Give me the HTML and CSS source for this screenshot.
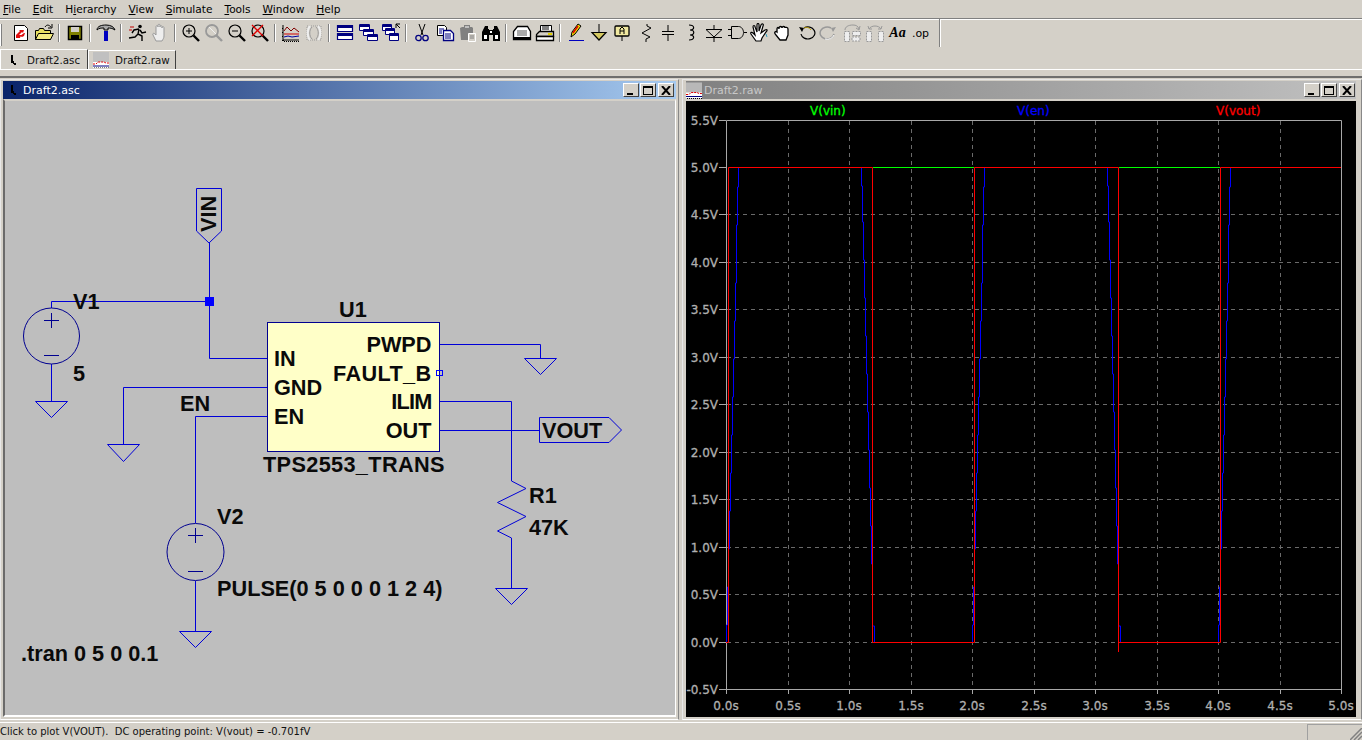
FILE: index.html
```html
<!DOCTYPE html>
<html lang="en">
<head>
<meta charset="utf-8">
<title>LTspice - Draft2</title>
<link rel="stylesheet" href="styles.css">
</head>
<body>
<nav class="menubar">
  <span class="menu"><u>F</u>ile</span><span class="menu"><u>E</u>dit</span><span class="menu">H<u>i</u>erarchy</span><span class="menu"><u>V</u>iew</span><span class="menu"><u>S</u>imulate</span><span class="menu"><u>T</u>ools</span><span class="menu"><u>W</u>indow</span><span class="menu"><u>H</u>elp</span>
</nav>
<div class="toolbar">
  <span class="grip"></span>
  <span class="tb"><svg viewBox="0 0 20 20"><path d="M3.5 2.5h10l3 3v12h-13z" fill="#fff" stroke="#000"/><path d="M5 12l4-4-1-1h5l-1 3-1-1-3 3 2 0-1 3-4 0zM9 13l4-3 1 0-1 3-2 1z" fill="#e01010"/></svg></span>
  <span class="tb"><svg viewBox="0 0 20 20"><path d="M1.5 7.5h3l1-2h4l1 2h6v9h-15z" fill="#e8e060" stroke="#000"/><path d="M1.5 16.5l3-6h15l-3 6z" fill="#f4ec80" stroke="#000"/><path d="M11 4c2-3 4-2 6 0M18 1v4h-4" fill="none" stroke="#000"/></svg></span>
  <span class="sep"></span>
  <span class="tb"><svg viewBox="0 0 20 20"><path d="M3.5 3.5h13v13h-13z" fill="#808000" stroke="#000" stroke-width="1.5"/><path d="M6 4h8v5H6z" fill="#d4d0c8"/><path d="M6 12h8v4H6z" fill="#000"/></svg></span>
  <span class="sep"></span>
  <span class="tb"><svg viewBox="0 0 20 20"><path d="M1 7c0-4 5-5 9-5 5 0 8 2 9 5-3-2-5-2-7-2v2H8V5C5 5 3 5 1 7z" fill="#a8a8a8" stroke="#000"/><path d="M8 8h4v10H8z" fill="#0000c0"/></svg></span>
  <span class="sep"></span>
  <span class="tb"><svg viewBox="0 0 20 20"><circle cx="13" cy="3.5" r="1.800"/><path d="M12 6l-5 1-2 3M12 6l-1 5 4 2 0 5M11 11l-3 3-6 1M13 7l2 3 4-1" fill="none" stroke="#000" stroke-width="1.400"/><path d="M3 4h4M2 7h3" stroke="#c00000"/></svg></span>
  <span class="tb"><svg viewBox="0 0 20 20"><path d="M6 18l-3-6c-1-2 1-2 2-1l1 1V4c0-2 2-2 2 0V2c0-1 2-1 2 0v2c0-2 2-2 2 0v1c0-2 2-2 2 0v8c0 2-1 3-2 5z" fill="#eee" stroke="#999"/></svg></span>
  <span class="sep"></span>
  <span class="tb"><svg viewBox="0 0 20 20"><circle cx="8" cy="8" r="6" fill="none" stroke="#000" stroke-width="1.200"/><path d="M5 8h6M8 5v6" stroke="#000"/><path d="M12.500 12.500l5.500 5.500" stroke="#000" stroke-width="2.400"/></svg></span>
  <span class="tb"><svg viewBox="0 0 20 20"><circle cx="8" cy="8" r="6" fill="none" stroke="#999" stroke-width="1.800"/><path d="M12.500 12.500l5.500 5.500" stroke="#999" stroke-width="2.400"/><path d="M5 4l7 7" stroke="#eee"/></svg></span>
  <span class="tb"><svg viewBox="0 0 20 20"><circle cx="8" cy="8" r="6" fill="none" stroke="#000" stroke-width="1.200"/><path d="M5 8h6" stroke="#000"/><path d="M12.500 12.500l5.500 5.500" stroke="#000" stroke-width="2.400"/></svg></span>
  <span class="tb"><svg viewBox="0 0 20 20"><circle cx="8" cy="8" r="6" fill="none" stroke="#000" stroke-width="1.200"/><path d="M12.500 12.500l5.500 5.500" stroke="#000" stroke-width="2.400"/><path d="M2 2l11 11M13 2L2 13" stroke="#e00000" stroke-width="1.300"/></svg></span>
  <span class="sep"></span>
  <span class="tb"><svg viewBox="0 0 20 20"><path d="M2 2v15h16M1 17.500h2M1 13.500h1M1 9.500h1M1 5.500h1" fill="none" stroke="#000"/><path d="M3 18.500h16" stroke="#000" stroke-dasharray="1 1"/><path d="M3 8l3-4 4 4 3-3 5 4" fill="none" stroke="#800000"/><path d="M3 11h15" stroke="#d00000"/><path d="M3 14l4-1 4 1 7-1" fill="none" stroke="#0000a0"/></svg></span>
  <span class="tb"><svg viewBox="0 0 20 20"><path d="M3 3h14v14H3z" fill="none" stroke="#999" stroke-dasharray="1 1"/><path d="M6 3c-3 3-3 11 0 14M14 3c3 3 3 11 0 14" fill="none" stroke="#eee" stroke-width="2"/><path d="M8 4c-3 3-3 9 0 12M12 4c3 3 3 9 0 12" fill="none" stroke="#999"/></svg></span>
  <span class="sep"></span>
  <span class="tb"><svg viewBox="0 0 20 20"><path d="M2.500 2.500h15v6h-15zM2.500 10.500h15v6h-15z" fill="#fff" stroke="#000080" stroke-width="1.200"/><path d="M2 3h16v2H2zM2 11h16v2H2z" fill="#000080"/></svg></span>
  <span class="tb"><svg viewBox="0 0 20 20"><path d="M1.500 1.500h10v6h-10zM5.500 6.500h10v6h-10zM9.500 11.500h10v6h-10z" fill="#fff" stroke="#000080"/><path d="M1 2h11v2H1zM5 7h11v2H5zM9 12h11v2H9z" fill="#000080"/></svg></span>
  <span class="tb"><svg viewBox="0 0 20 20"><path d="M1.500 1.500h9v6h-9zM4.500 5.500h9v6h-9zM8.500 10.500h9v7h-9z" fill="#fff" stroke="#000080"/><path d="M1 2h10v2H1zM4 6h10v2H4zM8 11h10v2H8z" fill="#000080"/><path d="M15 5V1h4M15 1l4 4" fill="none" stroke="#000"/></svg></span>
  <span class="sep"></span>
  <span class="tb"><svg viewBox="0 0 20 20"><path d="M7 1l4 11M13 1L9 12" stroke="#000" fill="none"/><circle cx="6.500" cy="15" r="2.700" fill="none" stroke="#000080" stroke-width="1.300"/><circle cx="13.500" cy="15" r="2.700" fill="none" stroke="#000080" stroke-width="1.300"/></svg></span>
  <span class="tb"><svg viewBox="0 0 20 20"><path d="M2.500 2.500h7l2 2v8h-9z" fill="#fff" stroke="#000"/><path d="M8.500 7.500h7l3 3v7h-10z" fill="#fff" stroke="#000080" stroke-width="1.300"/><path d="M4 6h5M4 8h3M4 10h3M10 11h6M10 13h6M10 15h6" stroke="#000080"/></svg></span>
  <span class="tb"><svg viewBox="0 0 20 20"><path d="M2 5l2-1h2V2h6v2h2l1 1v12H3z" fill="#808080"/><path d="M7 4h4" stroke="#fff"/><path d="M10.500 10.500h7v8h-7z" fill="#d4d0c8" stroke="#fff"/><path d="M12 13h4M12 15h4" stroke="#808080"/></svg></span>
  <span class="tb"><svg viewBox="0 0 20 20"><path d="M4 3h3v3h1v12H1V9zM16 3h-3v3h-1v12h7V9z" fill="#000"/><path d="M8 7h4v5H8z" fill="#000"/><path d="M3 12h3v4H3zM14 12h3v4h-3zM9 8h2v2H9z" fill="#fff"/></svg></span>
  <span class="sep"></span>
  <span class="tb"><svg viewBox="0 0 20 20"><path d="M5.500 3.500h10l3 5v8h-17v-8z" fill="#fff" stroke="#000" stroke-width="1.300"/><path d="M5 7h10v6H5z" fill="#aaa"/><path d="M2 15h16" stroke="#000" stroke-width="2"/></svg></span>
  <span class="tb"><svg viewBox="0 0 20 20"><path d="M5.500 2.500h11v6h-11z" fill="#fff" stroke="#000"/><path d="M7 4h7M7 6h7" stroke="#000"/><path d="M4.500 8.500h14v5h-17v-2z" fill="#d4d0c8" stroke="#000" stroke-width="1.300"/><path d="M1.500 13.500h17v4h-17z" fill="#fff" stroke="#000" stroke-width="1.300"/><path d="M13 11h4" stroke="#e0d000" stroke-width="2"/></svg></span>
  <span class="sep"></span>
  <span class="tb"><svg viewBox="0 0 20 20"><path d="M5 14l1-5 6-8 3 2-6 8z" fill="#f0e000" stroke="#000"/><path d="M7 10l5-7" stroke="#e00000" stroke-width="1.500"/><path d="M3 17.500h15" stroke="#0000c0"/></svg></span>
  <span class="tb"><svg viewBox="0 0 20 20"><path d="M10 1v8" stroke="#000"/><path d="M3 9.500h14L10 17z" fill="#d4c860" stroke="#000" stroke-width="1.200"/></svg></span>
  <span class="tb"><svg viewBox="0 0 20 20"><rect x="3" y="3" width="14" height="10" rx="1" fill="#f0e8a0" stroke="#000" stroke-width="1.300"/><path d="M8 11V6l2-2 2 2v5M8 8h4" fill="none" stroke="#000"/><path d="M10 13v5" stroke="#000"/></svg></span>
  <span class="tb"><svg viewBox="0 0 20 20"><path d="M12 1v2l4 2-9 5 8 4-4 2v3" fill="none" stroke="#000"/></svg></span>
  <span class="tb"><svg viewBox="0 0 20 20"><path d="M10 2v6M4 8.500h12M4 11.500h12M10 12v6" stroke="#000"/></svg></span>
  <span class="tb"><svg viewBox="0 0 20 20"><path d="M8 2c6 0 6 5 1 5 5 0 5 5 0 5 5 0 5 5-1 5" fill="none" stroke="#000" stroke-width="1.200"/></svg></span>
  <span class="tb"><svg viewBox="0 0 20 20"><path d="M10 2v4M2 6.500h16L10 14zM2 14.500h16M10 14v5" fill="none" stroke="#000"/></svg></span>
  <span class="tb"><svg viewBox="0 0 20 20"><path d="M4.500 3.500h7c3 0 5 3 5 6s-2 6-5 6h-7zM1 6.500h3M1 12.500h3M17 9.500h3" fill="#d4d0c8" stroke="#000"/></svg></span>
  <span class="tb"><svg viewBox="0 0 20 20"><path d="M6 18l-5-7c-1-2 1-2 2-1l2 2L3 4c0-2 2-2 2 0l2 5V2c0-2 2-2 2 0v6l2-6c1-2 3-1 2 1l-2 7 4-3c2-1 3 0 1 2l-4 6-1 3z" fill="#fff" stroke="#000" stroke-width="1.200"/><path d="M16 11l1 3" stroke="#30a0c0"/></svg></span>
  <span class="tb"><svg viewBox="0 0 20 20"><path d="M7 17l-4-5c-3-3 0-4 1-3V6c0-2 2-2 2 0V5c0-2 3-2 3 0 0-2 3-2 3 0 0-1 3-1 3 1v6l-2 5z" fill="#fff" stroke="#000" stroke-width="1.300"/></svg></span>
  <span class="tb"><svg viewBox="0 0 20 20"><path d="M5 11a7 6 0 1 0 3-6" fill="none" stroke="#000" stroke-width="1.200"/><path d="M8 5c2-1 5-1 7 2" fill="none" stroke="#c0a000"/><path d="M3 4l5 1-2 4z" fill="#000"/></svg></span>
  <span class="tb"><svg viewBox="0 0 20 20"><path d="M15 11a7 6 0 1 1-3-6" fill="none" stroke="#999" stroke-width="1.500"/><path d="M6 16a7 6 0 0 0 9-4" fill="none" stroke="#fff"/><path d="M17 4l-5 1 2 4z" fill="#999"/></svg></span>
  <span class="tb"><svg viewBox="0 0 20 20"><path d="M3 7c0-3 3-5 8-5 3 0 5 1 6 4M14 5l3 2 1-4" fill="none" stroke="#999"/><path d="M2.500 8.500h5v10h-5zM10.500 8.500h8v4h-8zM10 14h8v4h-8z" fill="#eee" stroke="#999" stroke-dasharray="2 1"/></svg></span>
  <span class="tb"><svg viewBox="0 0 20 20"><path d="M4 6c2-4 10-4 12 0M3 3l1 3 3 0M17 3l-1 3-3 0" fill="none" stroke="#999"/><path d="M1.500 8.500h5v10h-5zM13.500 8.500h5v10h-5z" fill="#eee" stroke="#999" stroke-dasharray="2 1"/></svg></span>
  <span class="tb"><span class="aa">Aa</span></span>
  <span class="tb"><span class="op">.op</span></span>
  <span class="sep sep-last"></span>
</div>
<div class="tabs">
  <span class="tab tab-active"><svg class="tab-icon" viewBox="0 0 16 16"><path d="M6 3h2v6h1v2h2v2h-2v-1H8v-1H6z" fill="#000"/></svg>Draft2.asc</span>
  <span class="tab"><svg class="tab-icon" viewBox="0 0 16 16"><path d="M0 0h16v16H0z" fill="#c0c0c0"/><path d="M0 10h16v6H0z" fill="#fff"/><path d="M0 12h3l2-2h6l2 1h3" fill="none" stroke="#e00000" stroke-dasharray="2 1"/><path d="M0 14h16" stroke="#000080"/><path d="M1 16h15" stroke="#000" stroke-dasharray="1 1"/></svg>Draft2.raw</span>
</div>
<main class="mdi">
  <section class="win win-left">
    <header class="title title-active">
      <svg class="title-icon" viewBox="0 0 16 16"><path d="M5 3h2v6h1v2h2v2H8v-1H7v-1H5z" fill="#000"/></svg>
      <span class="title-text">Draft2.asc</span>
      <span class="wbtns"><span class="wbtn"><i class="g-min"></i></span><span class="wbtn"><i class="g-max"></i></span><span class="wbtn wbtn-close"><svg viewBox="0 0 10 9"><path d="M1 0l8 9M9 0l-8 9" stroke="#000" stroke-width="2"/></svg></span></span>
    </header>
    <div class="canvas canvas-sch">
      <svg class="sch" viewBox="5 101 671 614" width="671" height="614">
        <g class="wires">
          <path d="M51.500 308V301.500H209.500M209.500 243V358.500H267"/>
          <path d="M51.500 364V401"/>
          <path d="M267 387.500H123.500V444"/>
          <path d="M267 416.500H195.500V523"/>
          <path d="M195.500 581V631"/>
          <path d="M439 344.500H540.500V358.500"/>
          <path d="M439 401.500H511.500V481"/>
          <path d="M439 430.500H539.500"/>
          <path d="M511.500 538V588"/>
        </g>
        <g class="shapes dark">
          <circle cx="51.500" cy="336" r="28"/>
          <path d="M44 320.500H59M51.500 313V328M44 355.500H59"/>
          <circle cx="195.500" cy="552" r="28.500"/>
          <path d="M188 535.500H203M195.500 528V543M188 571.500H203"/>
        </g>
        <g class="shapes">
          <path d="M35.500 401.500H67.500L51.500 417.500Z"/>
          <path d="M107.500 444.500H139.500L123.500 461.500Z"/>
          <path d="M179.500 631.500H211.500L195.500 647.500Z"/>
          <path d="M524.500 358.500H556.500L540.500 374.500Z"/>
          <path d="M495.500 588.500H527.500L511.500 604.500Z"/>
          <path d="M511.500 481L526 488.500 497.500 502.500 526 516.500 497.500 531 511.500 538"/>
          <path d="M196.500 188.500H221.500V231L209 243 196.500 231Z"/>
          <path d="M539.500 417.500H609L621.500 430 609 442.500H539.500Z"/>
        </g>
        <rect class="symbol" x="267.500" y="322.500" width="172" height="129"/>
        <rect class="junction" x="205" y="297" width="9" height="9"/>
        <rect class="pin" x="436.500" y="370.500" width="6" height="5"/>
        <g class="labels">
          <text x="73" y="309">V1</text>
          <text x="73" y="381">5</text>
          <text x="180" y="411">EN</text>
          <text x="339" y="317">U1</text>
          <text class="wide" x="263" y="472">TPS2553_TRANS</text>
          <text x="217" y="524">V2</text>
          <text x="217" y="596">PULSE(0 5 0 0 0 1 2 4)</text>
          <text x="21" y="661">.tran 0 5 0 0.1</text>
          <text x="529" y="503">R1</text>
          <text x="529" y="535">47K</text>
          <text x="542" y="438">VOUT</text>
          <text transform="translate(216 232) rotate(-90)">VIN</text>
        </g>
        <g class="labels pins">
          <text x="274" y="366">IN</text>
          <text x="274" y="395">GND</text>
          <text x="274" y="424">EN</text>
          <text class="end" x="431.500" y="352">PWPD</text>
          <text class="end wide" x="431.500" y="381">FAULT_B</text>
          <text class="end tight" x="431.500" y="409">ILIM</text>
          <text class="end" x="431.500" y="438">OUT</text>
        </g>
      </svg>
    </div>
  </section>
  <section class="win win-right">
    <header class="title title-idle">
      <svg class="title-icon-raw" viewBox="0 0 16 16"><path d="M0 0h16v16H0z" fill="#b8b8b8"/><path d="M0 10h16v6H0z" fill="#fff"/><path d="M0 12h3l2-2h6l2 1h3" fill="none" stroke="#e00000" stroke-dasharray="2 1"/><path d="M0 14h16" stroke="#000080"/><path d="M1 16h15" stroke="#000" stroke-dasharray="1 1"/></svg>
      <span class="title-text">Draft2.raw</span>
      <span class="wbtns"><span class="wbtn"><i class="g-min"></i></span><span class="wbtn"><i class="g-max"></i></span><span class="wbtn wbtn-close"><svg viewBox="0 0 10 9"><path d="M1 0l8 9M9 0l-8 9" stroke="#000" stroke-width="2"/></svg></span></span>
    </header>
    <div class="canvas canvas-plot">
      <svg class="plot" viewBox="686 101 670 614" width="670" height="614">
        <defs>
          <path id="rise" d="M726.500 642V625H727.500V587H728.500V549H729.500V511H730.500V473H731.500V435H732.500V397H733.500V359H734.500V321H735.500V283H736.500V225H737.500V187H738.500V167"/>
          <path id="fall" d="M861.500 167V186H862.500V222H863.500V260H864.500V298H865.500V336H866.500V374H867.500V412H868.500V450H869.500V488H870.500V526H871.500V564H872.500V626H874.500V642"/>
        </defs>
        <path class="grid" d="M727 214.500H1341M727 262.500H1341M727 309.500H1341M727 357.500H1341M727 404.500H1341M727 452.500H1341M727 499.500H1341M727 547.500H1341M727 594.500H1341M727 642.500H1341"/>
        <path class="grid" d="M788.500 121V689M849.500 121V689M911.500 121V689M972.500 121V689M1034.500 121V689M1095.500 121V689M1157.500 121V689M1218.500 121V689M1280.500 121V689"/>
        <path class="axis" d="M726.500 120.500H1341.500V689.500H726.500ZM719 120.500H726M719 167.500H726M719 214.500H726M719 262.500H726M719 309.500H726M719 357.500H726M719 404.500H726M719 452.500H726M719 499.500H726M719 547.500H726M719 594.500H726M719 642.500H726M719 689.500H726M788.500 689V694M849.500 689V694M911.500 689V694M972.500 689V694M1034.500 689V694M1095.500 689V694M1157.500 689V694M1218.500 689V694M1280.500 689V694M1341.500 689V694M726.500 689V694"/>
        <g class="tr-blue">
          <use href="#rise"/>
          <use href="#rise" transform="translate(246 0)"/>
          <use href="#rise" transform="translate(492 0)"/>
          <use href="#fall"/>
          <use href="#fall" transform="translate(246 0)"/>
        </g>
        <path class="tr-red" d="M726 642.500H728.500V167.500H872.500V642.500H974.500V167.500H1118.500V652M1118.500 642.500H1220.500V167.500H1341"/>
        <path class="tr-green" d="M873 167.500H974M1119 167.500H1220"/>
        <g class="ylab">
          <text x="718" y="125">5.5V</text><text x="718" y="172">5.0V</text><text x="718" y="219">4.5V</text><text x="718" y="267">4.0V</text><text x="718" y="314">3.5V</text><text x="718" y="362">3.0V</text><text x="718" y="409">2.5V</text><text x="718" y="457">2.0V</text><text x="718" y="504">1.5V</text><text x="718" y="552">1.0V</text><text x="718" y="599">0.5V</text><text x="718" y="647">0.0V</text><text x="718" y="694">-0.5V</text>
        </g>
        <g class="xlab">
          <text x="726" y="710">0.0s</text><text x="788" y="710">0.5s</text><text x="849" y="710">1.0s</text><text x="911" y="710">1.5s</text><text x="972" y="710">2.0s</text><text x="1034" y="710">2.5s</text><text x="1095" y="710">3.0s</text><text x="1157" y="710">3.5s</text><text x="1218" y="710">4.0s</text><text x="1280" y="710">4.5s</text><text x="1341" y="710">5.0s</text>
        </g>
        <text class="leg leg-g" x="810" y="115">V(vin)</text>
        <text class="leg leg-b" x="1017" y="115">V(en)</text>
        <text class="leg leg-r" x="1216" y="115">V(vout)</text>
      </svg>
    </div>
  </section>
</main>
<footer class="status">
  <span class="status-text">Click to plot V(VOUT).&nbsp; DC operating point: V(vout) = -0.701fV</span>
  <span class="status-pane"></span>
  <svg class="sizegrip" viewBox="0 0 12 12"><path d="M12 0L0 12M12 4L4 12M12 8L8 12" stroke="#808080" stroke-width="1.500"/></svg>
</footer>
</body>
</html>
```
FILE: styles.css
```css
* { box-sizing: border-box; }
html, body { margin: 0; height: 100%; }
body {
  width: 1362px; height: 740px; overflow: hidden;
  display: flex; flex-direction: column;
  background: #d4d0c8; color: #000;
  font-family: "DejaVu Sans", sans-serif; font-size: 11px;
}
.menubar {
  height: 19px; flex: none; display: flex; align-items: center;
  padding: 0 0 1px 0; border-bottom: 1px solid #808080; margin-left: -3px;
  width: 1365px; font-size: 10.600px;
}
.menu { padding: 0 6px; line-height: 18px; white-space: nowrap; }
.toolbar {
  height: 30px; flex: none; display: flex; align-items: center;
  border-top: 1px solid #fff; padding: 0 0 3px 9px; position: relative;
}
.grip {
  position: absolute; left: 0; top: 4px; width: 2px; height: 22px;
  border-right: 1px solid #808080; background: #fff;
}
.tb { width: 23px; height: 23px; flex: none; display: flex; align-items: center; justify-content: center; }
.tb svg { width: 20px; height: 20px; display: block; }
.sep { width: 2px; height: 18px; margin: 0 3px; flex: none; border-left: 1px solid #808080; border-right: 1px solid #fff; }
.sep-last { height: 28px; margin-left: 7px; }
.aa { font: italic bold 14px "Liberation Serif", serif; }
.op { font: 11px "DejaVu Sans", sans-serif; }
.tabs { height: 21px; flex: none; display: flex; align-items: flex-end; border-bottom: 1px solid #fff; }
.tab {
  height: 19px; display: flex; align-items: center; padding: 0 5px 0 4px;
  border-top: 1px solid #fff; border-right: 1px solid #404040; border-left: 1px solid #fff;
  white-space: nowrap; color: #111; font-size: 10.300px;
}
.tab-active { width: 88px; height: 20px; padding-left: 4px; }
.tab-icon { width: 16px; height: 16px; margin-right: 6px; flex: none; }
.mdi {
  flex: 1; min-height: 0; display: flex; gap: 3px;
  margin-top: 6px; padding: 1px 0 0; border-top: 2px solid #6e6e6e;
}
.win {
  display: flex; flex-direction: column; height: 641px;
  border: 1px solid; border-color: #e8e8e8 #888 #fff #e8e8e8; padding: 1px 2px 2px;
  background: #d4d0c8;
}
.win-left { width: 679px; }
.win-right { width: 680px; padding: 1px 5px 2px 3px; }
.title { height: 18px; flex: none; display: flex; align-items: center; color: #fff; font-size: 11px; padding-right: 2px; }
.title-active { background: linear-gradient(90deg, #0a246a, #a6caf0); }
.title-idle { background: linear-gradient(90deg, #808080, #c0c0c0); color: #c8c8c8; padding-right: 1px; }
.title-icon { width: 16px; height: 16px; margin: 0 1px 0 3px; flex: none; }
.title-icon-raw { width: 16px; height: 17px; margin: 0 2px 0 0; flex: none; }
.title-text { flex: 1; }
.wbtns { display: flex; gap: 1px; }
.wbtn {
  width: 16px; height: 14px; background: #d4d0c8; display: flex; justify-content: center; align-items: center;
  border: 1px solid; border-color: #fff #404040 #404040 #fff; position: relative;
}
.wbtn-close { margin-left: 1px; }
.wbtn svg { width: 10px; height: 9px; }
.g-min { position: absolute; left: 3px; bottom: 1px; width: 6px; height: 2px; background: #000; }
.g-max { width: 10px; height: 9px; border: 1px solid #000; border-top-width: 2px; }
.canvas { flex: 1; min-height: 0; border: 2px solid; border-color: #808080 #fff #fff #808080; }
.canvas-sch { background: #bebebe; border-left-color: #6a6a6a; border-top-color: #d4d0c8; border-right-width: 1px; }
.canvas-plot { background: #000; border: 0; margin-top: 2px; }
.sch, .plot { display: block; }
.wires path, .shapes path, .shapes circle { fill: none; stroke: #0000d8; stroke-width: 1; }
.shapes.dark path, .shapes.dark circle { stroke: #000090; }
.symbol { fill: #ffffc8; stroke: #000090; stroke-width: 1; }
.junction { fill: #0000ff; }
.pin { fill: none; stroke: #0000ff; }
.labels text { font: bold 21.700px "Liberation Sans", Arial, sans-serif; fill: #0a0a0a; }
.labels text.end { text-anchor: end; }
.labels text.wide { letter-spacing: 0.350px; }
.labels text.tight { letter-spacing: -0.800px; }
.grid { stroke: #6a6a6a; stroke-dasharray: 4 4; fill: none; }
.axis { stroke: #a8a8a8; fill: none; }
.tr-green, .tr-blue, .tr-red { fill: none; }
.tr-green { stroke: #00ff00; }
.tr-blue { stroke: #0000ff; }
.tr-red { stroke: #ff0000; }
.ylab text, .xlab text { font: 12px "DejaVu Sans", sans-serif; fill: #b0b0b0; stroke: #b0b0b0; stroke-width: 0.300px; }
.ylab text { text-anchor: end; }
.xlab text { text-anchor: middle; }
.leg { font: 12px "DejaVu Sans", sans-serif; stroke-width: 0.300px; }
.leg-g { fill: #00ff00; stroke: #00ff00; }
.leg-b { fill: #0000ff; stroke: #0000ff; }
.leg-r { fill: #ff0000; stroke: #ff0000; }
.status {
  height: 18px; flex: none; border-top: 1px solid #fff; display: flex; align-items: center;
  position: relative; font-size: 10px; color: #111;
}
.status-text { flex: 1; white-space: nowrap; }
.status-pane { width: 55px; height: 16px; align-self: flex-end; border: 1px solid #a0a0a0; border-right: 0; border-bottom: 0; }
.sizegrip { position: absolute; right: 0; bottom: 0; width: 12px; height: 12px; }
```
